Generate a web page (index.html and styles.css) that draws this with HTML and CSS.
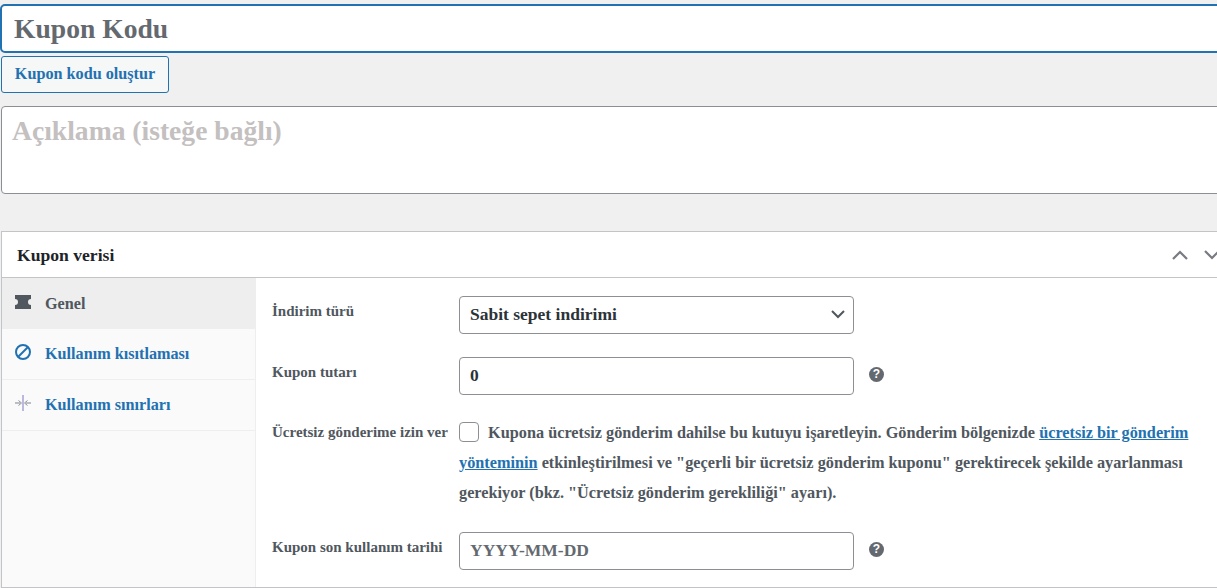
FILE: index.html
```html
<!DOCTYPE html>
<html lang="tr">
<head>
    <meta charset="UTF-8">
    <meta name="viewport" content="width=device-width, initial-scale=1.0">
    <title>Kupon Kodu</title>
    <link rel="stylesheet" href="styles.css">
</head>
<body>
    <div class="page">
        <input class="title-input" type="text" placeholder="Kupon Kodu">
        <button class="generate-btn" type="button">Kupon kodu oluştur</button>
        <textarea class="desc-input" placeholder="Açıklama (isteğe bağlı)"></textarea>

        <div class="postbox">
            <div class="postbox-header">
                <h2>Kupon verisi</h2>
                <div class="handle-actions">
                    <svg width="18" height="10" viewBox="0 0 18 10"><path d="M2 9l7-7 7 7" fill="none" stroke="#787c82" stroke-width="2.2"/></svg>
                    <svg width="18" height="10" viewBox="0 0 18 10"><path d="M2 1l7 7 7-7" fill="none" stroke="#787c82" stroke-width="2.2"/></svg>
                </div>
            </div>
            <div class="postbox-body">
                <ul class="tabs">
                    <li class="tab active">
                        <svg width="18" height="14" viewBox="0 0 18 14"><path d="M1 0h16v4a3 3 0 0 0 0 6v4H1v-4a3 3 0 0 0 0-6z" fill="#50575e"/></svg>
                        <span>Genel</span>
                    </li>
                    <li class="tab">
                        <svg width="18" height="18" viewBox="0 0 18 18"><circle cx="9" cy="9" r="7" fill="none" stroke="#2271b1" stroke-width="2"/><path d="M4 14L14 4" stroke="#2271b1" stroke-width="2"/></svg>
                        <span>Kullanım kısıtlaması</span>
                    </li>
                    <li class="tab">
                        <svg width="18" height="18" viewBox="0 0 18 18"><path d="M9 1v16" stroke="#7b76c4" stroke-width="1"/><path d="M1 9h5M12 9h5" stroke="#a7aab2" stroke-width="1.500"/><path d="M4.500 6.500L7.500 9l-3 2.500M13.500 6.500L10.500 9l3 2.500" fill="none" stroke="#8a8f99" stroke-width="1"/></svg>
                        <span>Kullanım sınırları</span>
                    </li>
                </ul>
                <div class="panel">
                    <div class="field">
                        <label>İndirim türü</label>
                        <div class="select-box">
                            <select class="control">
                                <option>Sabit sepet indirimi</option>
                            </select>
                            <svg class="select-arrow" width="16" height="10" viewBox="0 0 16 10"><path d="M2 2l6 6 6-6" fill="none" stroke="#50575e" stroke-width="2"/></svg>
                        </div>
                    </div>
                    <div class="field">
                        <label>Kupon tutarı</label>
                        <input class="control" type="text" value="0">
                        <span class="help">?</span>
                    </div>
                    <div class="field field-check">
                        <label>Ücretsiz gönderime izin ver</label>
                        <p class="check-text">
                            <input class="check" type="checkbox">
                            Kupona ücretsiz gönderim dahilse bu kutuyu işaretleyin. Gönderim bölgenizde <a href="#">ücretsiz bir gönderim yönteminin</a> etkinleştirilmesi ve "geçerli bir ücretsiz gönderim kuponu" gerektirecek şekilde ayarlanması gerekiyor (bkz. "Ücretsiz gönderim gerekliliği" ayarı).
                        </p>
                    </div>
                    <div class="field">
                        <label>Kupon son kullanım tarihi</label>
                        <input class="control" type="text" placeholder="YYYY-MM-DD">
                        <span class="help">?</span>
                    </div>
                </div>
            </div>
        </div>
    </div>
</body>
</html>
```

FILE: styles.css
```css
* {
    box-sizing: border-box;
}

html, body {
    height: 100%;
}

body {
    margin: 0;
    background-color: #f0f0f1;
    color: #50575e;
    font-family: "Liberation Serif", serif;
    font-weight: bold;
    font-size: 14px;
    overflow: hidden;
}

.page {
    width: 1240px;
    padding: 4px 0 0 1px;
}

input, select, textarea, button {
    font-family: inherit;
    font-weight: bold;
}

.title-input {
    display: block;
    width: 100%;
    height: 49px;
    margin-left: -1px;
    padding: 0 12px;
    border: 2px solid #2271b1;
    border-radius: 5px;
    background: #fff;
    font-size: 27.6px;
    outline: none;
}

.title-input::placeholder {
    color: #646970;
    opacity: 1;
}

.generate-btn {
    display: block;
    width: 168px;
    height: 37px;
    margin-top: 3px;
    padding: 0;
    border: 1px solid #2271b1;
    border-radius: 3px;
    background: #f6f7f7;
    color: #2271b1;
    font-size: 16.2px;
}

.desc-input {
    display: block;
    width: 100%;
    height: 88px;
    margin-top: 13px;
    padding: 8px 10px;
    border: 1px solid #8c8f94;
    border-radius: 4px;
    background: #fff;
    font-size: 27.6px;
    resize: none;
}

.desc-input::placeholder {
    color: #c3c0bf;
    opacity: 1;
}

.postbox {
    margin-top: 37px;
    border: 1px solid #c3c4c7;
    background: #fff;
}

.postbox-header {
    display: flex;
    justify-content: space-between;
    align-items: center;
    height: 46px;
    padding-left: 15px;
    border-bottom: 1px solid #c3c4c7;
}

.postbox-header h2 {
    margin: 2px 0 0;
    color: #1d2327;
    font-size: 17.6px;
}

.handle-actions {
    display: flex;
    gap: 14px;
    margin-right: 18px;
}

.postbox-body {
    display: flex;
    height: 309px;
}

.tabs {
    flex: none;
    width: 254px;
    margin: 0;
    padding: 0;
    list-style: none;
    background: #fafafa;
    border-right: 1px solid #eee;
}

.tab {
    display: flex;
    align-items: center;
    gap: 13px;
    height: 51px;
    padding: 0 0 0 12px;
    border-bottom: 1px solid #eee;
    color: #2271b1;
    font-size: 16.2px;
}

.tab span {
    margin-top: 1px;
}

.tab svg {
    flex: none;
    margin-top: -4px;
}

.tab.active {
    background: #eee;
    color: #50575e;
    border-bottom: 0;
}

.panel {
    flex: 1;
    padding: 18px 0 0 16px;
}

.field {
    display: flex;
    align-items: flex-start;
    width: 930px;
    margin-bottom: 23px;
}

.field label {
    flex: none;
    width: 187px;
    padding-top: 7px;
    font-size: 15px;
}

.control {
    width: 395px;
    height: 38px;
    padding: 0 10px 2px;
    border: 1px solid #8c8f94;
    border-radius: 4px;
    background: #fff;
    color: #2c3338;
    font-size: 17.5px;
    appearance: none;
}

.control::placeholder {
    color: #646970;
    opacity: 1;
}

.select-box {
    position: relative;
}

.select-arrow {
    position: absolute;
    top: 13px;
    right: 8px;
}

.help {
    width: 15px;
    height: 15px;
    margin: 10px 0 0 15px;
    border-radius: 50%;
    background: #646970;
    color: #fff;
    font-family: "Liberation Sans", sans-serif;
    font-size: 12px;
    line-height: 15px;
    text-align: center;
}

.field-check {
    margin: 1px 0 24px;
}

.field-check label {
    padding-top: 6px;
}

.check-text {
    flex: 1;
    margin: 0;
    font-size: 16.25px;
    line-height: 30px;
}

.check {
    width: 20px;
    height: 20px;
    margin: 0 5px 0 0;
    border: 1px solid #8c8f94;
    border-radius: 4px;
    background: #fff;
    vertical-align: -4px;
    appearance: none;
}

.check-text a {
    color: #2271b1;
}
```
